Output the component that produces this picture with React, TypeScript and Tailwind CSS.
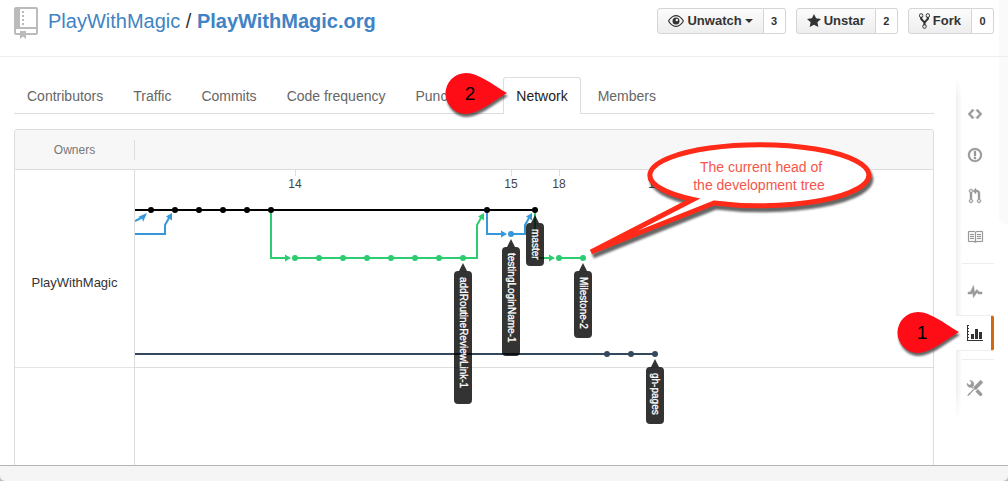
import type { ReactNode } from 'react';

type IconProps = { d: string; w: number; h?: number; className?: string };

function Icon({ d, w, h = 16, className = '' }: IconProps) {
  return (
    <svg viewBox={`0 0 ${w} ${h}`} className={`overflow-visible fill-current ${className}`} aria-hidden="true">
      <path fillRule="evenodd" d={d} />
    </svg>
  );
}

const EYE =
  'M8.060 2C3 2 0 8 0 8s3 6 8.060 6C13 14 16 8 16 8s-3-6-7.940-6zM8 12.800C4.600 12.800 2.200 9.800 1.300 8 2.200 6.200 4.600 3.200 8 3.200s5.800 3 6.700 4.800C13.800 9.800 11.400 12.800 8 12.800zM8 4.500a3.500 3.500 0 1 0 0 7 3.500 3.500 0 0 0 0-7zM8.800 5.800a1.200 1.200 0 1 1 0 2.400 1.200 1.200 0 0 1 0-2.400z';
const STAR = 'M14 6l-4.900-.64L7 1 4.900 5.360 0 6l3.600 3.260L2.670 14 7 11.670 11.330 14l-.93-4.740z';
const FORK =
  'M8 1a1.993 1.993 0 0 0-1 3.720V6L5 8 3 6V4.720A1.993 1.993 0 0 0 2 1a1.993 1.993 0 0 0-1 3.720V6.500l3 3v1.780A1.993 1.993 0 0 0 5 15a1.993 1.993 0 0 0 1-3.720V9.500l3-3V4.720A1.993 1.993 0 0 0 8 1zM2 4.200C1.340 4.200.8 3.650.8 3c0-.65.55-1.200 1.200-1.200.65 0 1.200.55 1.200 1.200 0 .65-.55 1.200-1.200 1.200zm3 10c-.66 0-1.200-.55-1.200-1.200 0-.65.55-1.200 1.200-1.200.65 0 1.200.55 1.200 1.200 0 .65-.55 1.200-1.200 1.200zm3-10c-.66 0-1.200-.55-1.200-1.200 0-.65.55-1.200 1.200-1.200.65 0 1.200.55 1.200 1.200 0 .65-.55 1.200-1.200 1.200z';
const CODE = 'M9.500 3L8 4.500 11.500 8 8 11.500 9.500 13 14 8 9.500 3zm-5 0L0 8l4.500 5L6 11.500 2.500 8 6 4.500 4.500 3z';
const ISSUE =
  'M7 2.800a5.200 5.200 0 1 1 0 10.400A5.200 5.200 0 0 1 7 2.800zM7 1C3.140 1 0 4.140 0 8s3.140 7 7 7 7-3.140 7-7-3.140-7-7-7zm1 3H6v5h2V4zm0 6H6v2h2v-2z';
const PULL =
  'M11 11.280V5c-.03-.78-.34-1.470-.94-2.060C9.460 2.350 8.780 2.030 8 2H7V0L4 3l3 3V4h1c.27.02.48.11.69.31.21.2.3.42.31.69v6.280A1.993 1.993 0 0 0 10 15a1.993 1.993 0 0 0 1-3.720zm-1 2.920c-.66 0-1.200-.55-1.200-1.200 0-.65.55-1.200 1.200-1.200.65 0 1.200.55 1.200 1.200 0 .65-.55 1.200-1.200 1.200zM4 3c0-1.110-.89-2-2-2a1.993 1.993 0 0 0-1 3.720v6.560A1.993 1.993 0 0 0 2 15a1.993 1.993 0 0 0 1-3.720V4.720c.59-.34 1-.98 1-1.720zm-.8 10c0 .66-.55 1.200-1.200 1.200-.65 0-1.200-.55-1.200-1.200 0-.65.55-1.200 1.200-1.200.65 0 1.200.55 1.200 1.200zM2 4.200C1.340 4.200.8 3.650.8 3c0-.65.55-1.200 1.200-1.200.65 0 1.200.55 1.200 1.200 0 .65-.55 1.200-1.200 1.200z';
const BOOK =
  'M3 5h4v1H3V5zm0 3h4V7H3v1zm0 2h4V9H3v1zm11-5h-4v1h4V5zm0 2h-4v1h4V7zm0 2h-4v1h4V9zm2-6v9c0 .55-.45 1-1 1H9.500l-1 1-1-1H2c-.55 0-1-.45-1-1V3c0-.55.45-1 1-1h5.500l1 1 1-1H15c.55 0 1 .45 1 1zm-8 .5L7.500 3H2v9h6V3.500zm7-.5H9.500l-.5.5V12h6V3z';
const PULSE = 'M11.500 8L8.800 5.400 6.600 8.500 5.500 1.600 2.380 8H0v2h3.600l.9-1.800.9 5.400L9 8.500l1.600 1.500H14V8z';
const GRAPH =
  'M0 0h2v1H1v2h1v1H1v2h1v1H1v2h1v1H1v2h1v1H1v2h15v1H0zM4 9h3v5H4zM8 4h3v10H8zM12 7h3v7h-3z';
const TOOLS =
  'M4.480 7.270c.26.26 1.280 1.330 1.280 1.330l.56-.58-.88-.91 1.690-1.800s-.76-.74-.43-.45c.32-1.190.03-2.510-.87-3.440C4.930.5 3.660.2 2.520.51l1.930 2-.51 1.960-1.890.52-1.930-1.990C-.19 4.170.1 5.480 1 6.400c.94.98 2.290 1.260 3.480.87zm6.440 1.940l-2.330 2.300 3.840 3.980c.31.33.73.49 1.140.49.41 0 .82-.16 1.140-.49.63-.65.63-1.700 0-2.350l-3.790-3.930zM16 2.530L13.550 0 6.330 7.460l.88.91-4.310 4.460-.99.53-1.390 2.270.35.37 2.200-1.440.51-1.020L7.900 9.080l.88.91L16 2.530z';

function RepoIcon() {
  return (
    <svg viewBox="0 0 24 32" className="h-8 w-6 shrink-0" aria-hidden="true">
      <path
        fill="#bbb"
        fillRule="evenodd"
        d="M2 0h20a2 2 0 0 1 2 2v24a2 2 0 0 1-2 2H12v4l-3-2.500L6 32v-4H2a2 2 0 0 1-2-2V2a2 2 0 0 1 2-2zM6 2v18h16V2zM2 22v4h4v-2h6v2h10v-4zM8 4h2v2H8zM8 8h2v2H8zM8 12h2v2H8zM8 16h2v2H8z"
      />
    </svg>
  );
}

function SocialButton({ label, count, children, caret }: { label: string; count: number; children: ReactNode; caret?: boolean }) {
  return (
    <div className="flex h-[26px] text-[#333]">
      <button
        type="button"
        className="flex items-center gap-[3px] rounded-l-[3px] border border-[#d5d5d5] bg-linear-to-b from-[#fcfcfc] to-[#eee] px-2.5 text-[13px] font-bold"
      >
        {children}
        {label}
        {caret && (
          <svg viewBox="0 0 8 4" className="h-1 w-2 fill-current" aria-hidden="true">
            <path d="M0 0h8L4 4z" />
          </svg>
        )}
      </button>
      <a
        href="#count"
        aria-label={`${label} count`}
        className="flex w-[22px] items-center justify-center rounded-r-[3px] border border-l-0 border-[#d5d5d5] bg-white text-[11px] font-bold"
      >
        {count}
      </a>
    </div>
  );
}

function Pin({ n }: { n: number }) {
  return (
    <svg width="70" height="50" viewBox="0 0 70 50" aria-hidden="true" className="overflow-visible">
      <path
        d="M61 20C50 14 33 0 20 0a20 20 0 0 0 0 41C33 41 50 26 61 20z"
        fill="#ff0d16"
        className="drop-shadow-[1px_3px_1px_rgba(0,0,0,0.6)]"
      />
      <text x="24" y="27" textAnchor="middle" fontSize="19" fill="#000">
        {n}
      </text>
    </svg>
  );
}

const TABS = ['Contributors', 'Traffic', 'Commits', 'Code frequency', 'Punch card', 'Network', 'Members'];

function Tabs() {
  return (
    <nav className="flex gap-1 border-b border-[#ddd] text-sm whitespace-nowrap" aria-label="Graphs">
      {TABS.map((tab) =>
        tab === 'Network' ? (
          <div key={tab} className="relative">
            <a
              href="#network"
              aria-current="page"
              className="-mb-px block rounded-t-[3px] border border-b-0 border-[#ddd] bg-white px-3 pt-2 pb-[7px] leading-[21px] text-[#222]"
            >
              {tab}
            </a>
            <div className="pointer-events-none absolute -top-1 -left-[57px]">
              <Pin n={2} />
            </div>
          </div>
        ) : (
          <a key={tab} href="#graphs" className="block border border-b-0 border-transparent px-3 pt-2 leading-[21px] text-[#666]">
            {tab}
          </a>
        ),
      )}
    </nav>
  );
}

const col = (n: number) => 16 + 24 * n;
const MASTER_Y = 40;
const TOPIC_Y = 64;
const DEV_Y = 88;
const PAGES_Y = 184;
const BLUE = '#3498db';
const GREEN = '#2ecc71';
const NAVY = '#34495e';

const COMMITS = [
  { y: MASTER_Y, fill: '#000', at: [0, 1, 2, 3, 4, 5, 14, 16] },
  { y: DEV_Y, fill: GREEN, at: [6, 7, 8, 9, 10, 11, 12, 13, 17, 18] },
  { y: TOPIC_Y, fill: BLUE, at: [15] },
  { y: PAGES_Y, fill: NAVY, at: [19, 20, 21] },
];

const DATES = [
  { n: 6, label: '14' },
  { n: 15, label: '15' },
  { n: 17, label: '18' },
  { n: 21, label: '19' },
];

const HEADS = [
  { n: 13, y: DEV_Y, name: 'addRoutineReviewLink-1', size: 133 },
  { n: 15, y: TOPIC_Y, name: 'testingLoginName-1', size: 109 },
  { n: 16, y: MASTER_Y, name: 'master', size: 43 },
  { n: 18, y: DEV_Y, name: 'Milestone-2', size: 67 },
  { n: 21, y: PAGES_Y, name: 'gh-pages', size: 57 },
];

function NetworkGraph() {
  return (
    <svg className="absolute inset-0 h-full w-full" role="img" aria-label="Commit network">
      <line x1="0" x2="100%" y1="197.5" y2="197.5" stroke="#ddd" />
      {DATES.map(({ n, label }) => (
        <g key={label}>
          <line x1={col(n) + 0.5} x2={col(n) + 0.5} y1="0" y2="6" stroke="#ddd" />
          <text x={col(n)} y="18" textAnchor="middle" fontSize="12" fill="#444">
            {label}
          </text>
        </g>
      ))}
      <g fill="none" strokeWidth="2">
        <path d={`M0 ${PAGES_Y}H${col(21)}`} stroke={NAVY} />
        <g stroke={BLUE}>
          <path d="M0 51L8 47M0 64H30V55L34 48" />
          <path d="M352 40V64H366M376 64H390V55L394 48" />
        </g>
        <g stroke={GREEN}>
          <path d="M136 40V88H150M160 88H342V55L346 48" />
          <path d="M400 40V88H414M424 88H448" />
        </g>
        <path d={`M0 ${MASTER_Y}H${col(16)}`} stroke="#000" />
      </g>
      <g fill={BLUE}>
        <path d="M12 43L3 47L7 48L8 52z" />
        <path d="M37 43L31 46.500L37 50.500z" />
        <path d="M366 60.500V67.500L372 64z" />
        <path d="M397 43L391 46.500L397 50.500z" />
      </g>
      <g fill={GREEN}>
        <path d="M150 84.500V91.500L156 88z" />
        <path d="M349 43L343 46.500L349 50.500z" />
        <path d="M414 84.500V91.500L420 88z" />
      </g>
      {COMMITS.map(({ y, fill, at }) => at.map((n) => <circle key={`${y}-${n}`} cx={col(n)} cy={y} r="3" fill={fill} />))}
      {HEADS.map(({ n, y, name, size }) => (
        <g key={name} transform={`translate(${col(n)} ${y})`}>
          <path d={`M0 5L4 13H5a4 4 0 0 1 4 4V${9 + size}a4 4 0 0 1-4 4H-5a4 4 0 0 1-4-4V17a4 4 0 0 1 4-4H-4z`} fill="#000" fillOpacity="0.8" />
          <text transform="translate(-3 19) rotate(90)" fontSize="10" fill="#fff" stroke="#fff" strokeWidth="0.3">
            {name}
          </text>
        </g>
      ))}
    </svg>
  );
}

function Callout() {
  return (
    <svg width="300" height="130" viewBox="0 0 300 130" className="pointer-events-none absolute top-[11px] left-[575px] overflow-visible">
      <path
        d="M103 58.500A109.500 30.500 0 1 1 124 62L1 111z"
        fill="#fff"
        stroke="#ff2a17"
        strokeWidth="5"
        className="drop-shadow-[2px_4px_1px_rgba(0,0,0,0.6)]"
      />
      <g fontSize="14" fill="#f4564b" textAnchor="middle">
        <text x="171" y="31">The current head of</text>
        <text x="169" y="49">the development tree</text>
      </g>
    </svg>
  );
}

function NavItem({ label, children }: { label: string; children: ReactNode }) {
  return (
    <a href="#repo" aria-label={label} className="flex h-[41px] items-center justify-center stroke-current text-[#999]">
      {children}
    </a>
  );
}

function SideNav() {
  const rule = <hr className="mt-1.5 mb-[7px] border-[#eee]" />;
  return (
    <nav className="relative mt-[22px] w-[38px] shrink-0 self-start pt-3.5 pb-3" aria-label="Repository">
      <div className="absolute inset-y-0 left-0 w-1.5 bg-linear-to-r from-[#eee] to-white mask-[linear-gradient(to_bottom,transparent,#000_20px,#000_calc(100%-30px),transparent)]" />
      <NavItem label="Code"><Icon d={CODE} w={14} className="h-4 w-3.5 stroke-[0.5]" /></NavItem>
      <NavItem label="Issues"><Icon d={ISSUE} w={14} className="h-4 w-3.5 stroke-[0.3]" /></NavItem>
      <NavItem label="Pull requests"><Icon d={PULL} w={12} className="h-4 w-3 stroke-[0.4]" /></NavItem>
      <NavItem label="Wiki"><Icon d={BOOK} w={16} className="h-4 w-4 stroke-[0.2]" /></NavItem>
      {rule}
      <NavItem label="Pulse"><Icon d={PULSE} w={14} className="h-4 w-3.5 stroke-[0.5]" /></NavItem>
      <div className="relative flex h-[41px] items-center">
        <a
          href="#graphs"
          aria-label="Graphs"
          aria-current="page"
          className="flex h-9 grow items-center justify-center rounded-r-[3px] border-y border-r-3 border-y-[#eee] border-r-[#d26911] bg-white pl-[3px] text-[#333]"
        >
          <Icon d={GRAPH} w={16} className="h-4 w-4" />
        </a>
        <div className="pointer-events-none absolute top-0 -left-[58px]">
          <Pin n={1} />
        </div>
      </div>
      {rule}
      <NavItem label="Settings"><Icon d={TOOLS} w={16} className="h-4 w-4 stroke-[0.3]" /></NavItem>
    </nav>
  );
}

export default function App() {
  return (
    <div className="relative flex min-h-screen flex-col bg-white font-['Liberation_Sans',Arial,sans-serif]">
      <div className="absolute top-0 right-0 h-56 w-[9px] rounded-bl-md bg-[#fafafa]" />

      <header className="relative flex h-[57px] items-start justify-between border-b border-[#eee] px-3.5">
        <div className="flex gap-2.5 pt-[7px]">
          <RepoIcon />
          <h1 className="text-xl leading-7 whitespace-nowrap text-[#333]">
            <a href="#owner" className="text-[#4183c4]">PlayWithMagic</a>
            {' / '}
            <a href="#repo" className="font-bold text-[#4183c4]">PlayWithMagic.org</a>
          </h1>
        </div>
        <div className="flex gap-2.5 pt-2">
          <SocialButton label="Unwatch" count={3} caret>
            <Icon d={EYE} w={16} className="h-4 w-4" />
          </SocialButton>
          <SocialButton label="Unstar" count={2}>
            <Icon d={STAR} w={14} className="h-4 w-3.5" />
          </SocialButton>
          <SocialButton label="Fork" count={0}>
            <Icon d={FORK} w={10} className="h-[18px] w-[11px]" />
          </SocialButton>
        </div>
      </header>

      <div className="flex grow gap-[22px] px-3.5">
        <main className="flex min-w-0 grow flex-col pt-5">
          <Tabs />
          <section className="relative mt-[15px] flex grow flex-col rounded-t-[3px] border border-b-0 border-[#ddd]">
            <div className="flex h-10 items-center border-b border-[#ddd] bg-[#f7f7f7]">
              <h2 className="w-[120px] border-r border-[#ddd] text-center text-xs leading-5 text-[#777]">Owners</h2>
            </div>
            <div className="flex grow">
              <div className="w-[120px] shrink-0 border-r border-[#ddd]">
                <div className="flex h-[198px] items-center justify-center border-b border-[#e5e5e5] pt-7 text-[13px] text-[#333]">
                  PlayWithMagic
                </div>
              </div>
              <div className="relative grow">
                <NetworkGraph />
              </div>
            </div>
            <Callout />
          </section>
        </main>
        <SideNav />
      </div>

      <footer className="border-t border-[#b5b5b5] bg-[#bbb]">
        <div className="h-[15px] rounded-b-[5px] bg-[#f5f5f5]" />
      </footer>
    </div>
  );
}
